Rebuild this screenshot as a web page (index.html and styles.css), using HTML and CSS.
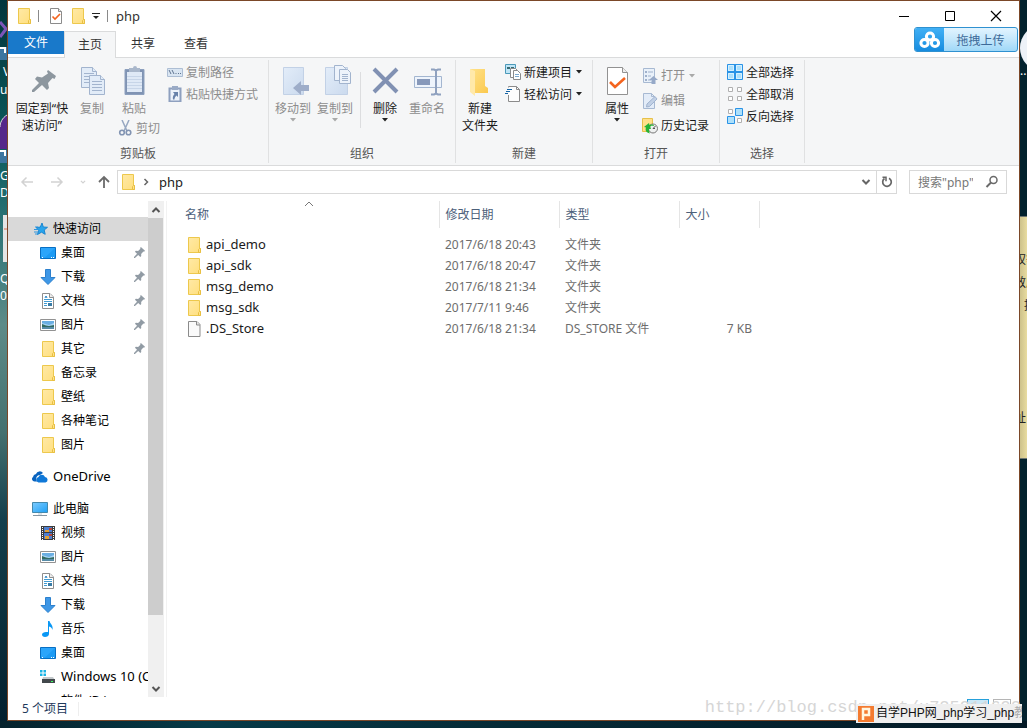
FILE: index.html
```html
<!DOCTYPE html>
<html lang="zh-CN">
<head>
<meta charset="utf-8">
<title>php</title>
<link rel="stylesheet" href="styles.css">
</head>
<body class="desktop">
<svg class="sprite" aria-hidden="true">
  <linearGradient id="gFolder" x1="0" y1="0" x2="1" y2="1"><stop offset="0" stop-color="#ffe9a6"/><stop offset="1" stop-color="#ffdf7e"/></linearGradient>
  <linearGradient id="gPale" x1="0" y1="0" x2="1" y2="1"><stop offset="0" stop-color="#e3edf9"/><stop offset="1" stop-color="#cbdaee"/></linearGradient>
  <linearGradient id="gScreen" x1="0" y1="0" x2="1" y2="1"><stop offset="0" stop-color="#7ccbff"/><stop offset="1" stop-color="#1fa0f5"/></linearGradient>
  <linearGradient id="gGold" x1="0" y1="0" x2="1" y2="1"><stop offset="0" stop-color="#ffe28a"/><stop offset="1" stop-color="#fbc94f"/></linearGradient>
  <symbol id="folder" viewBox="0 0 16 16"><path d="M2.500 .5h11v11h1v4h-12z" fill="url(#gFolder)" stroke="#edc84c"/><path d="M12.500 15.500v-3l1-1h1v4z" fill="#ffe28a" stroke="#e8bf42"/></symbol>
  <symbol id="file" viewBox="0 0 16 16"><path d="M2.500 .5h8.500l3 3v12H2.500z" fill="#fafafa" stroke="#8b8b8b"/><path d="M10.500 .5v3.500H14" fill="#e6e6e6" stroke="#8b8b8b"/></symbol>
  <symbol id="checkfile" viewBox="0 0 16 16"><path d="M2.500 .5h8l3 3v12h-11z" fill="#fff" stroke="#8b8b8b"/><path d="M10.500 .5v3h3" fill="#eee" stroke="#8b8b8b"/><path d="M4.500 8.500l2.500 2.500 5-5" fill="none" stroke="#f4641e" stroke-width="1.600"/></symbol>
  <symbol id="pin" viewBox="0 0 12 12"><path d="M7.500 0L12 4l-1 1.200-.8-.2-2.400 2.500.1 2.300-1 1L4.600 8.600 1 12H0v-1l3.300-3.600L1 5.200l1-1 2.500.1L7 2l-.3-1z" fill="#919ba4"/></symbol>
  <symbol id="desk" viewBox="0 0 16 16"><path d="M.5 2.500h15v11H.5z" fill="#1c9bf4" stroke="#086fc3"/><path d="M1 3h14L5 12.500H1z" fill="#35acff" opacity=".6"/><path d="M2 12h1v1H2zm9 0h1v1h-1zm2 0h1v1h-1z" fill="#fff"/></symbol>
  <symbol id="down" viewBox="0 0 16 16"><path d="M5.500 .5h5v8h4.500L8 15.500 1 8.500h4.500z" fill="#3e97e6" stroke="#2c80cd"/></symbol>
  <symbol id="doc" viewBox="0 0 16 16"><path d="M2.500 .5h7.500l3.500 3.500v11.500h-11z" fill="#fff" stroke="#8d8d8d"/><path d="M9.500 .5v4h4" fill="#eee" stroke="#8d8d8d"/><path d="M4 6.500h8M4 8.500h8M4 10.500h3M4 12.500h3" stroke="#409bd2"/><path d="M5 5l1-2 1 2" fill="none" stroke="#2683c5"/><path d="M8 10h4v3H8z" fill="#3a7ba5"/></symbol>
  <symbol id="pic" viewBox="0 0 16 16"><path d="M.5 2.500h15v11H.5z" fill="#fff" stroke="#929292"/><path d="M2 4h12v8H2z" fill="#a9d5f5"/><path d="M2 4h12v2L9 8 2 6z" fill="#6aaee2"/><path d="M2 7l4 1.500 3 .5 5-1v4H2z" fill="#326b62"/><path d="M2 10h12v2H2z" fill="#568ba7"/></symbol>
  <symbol id="cloud" viewBox="0 0 16 16"><path d="M5 12.500H2.500A2.500 2.500 0 0 1 1 8a3.500 3.500 0 0 1 3-3 4 4 0 0 1 7-1L8 6c-3 0-5 3-3 6.500z" fill="#0a63be"/><path d="M6.500 13.500a2.800 2.800 0 0 1 0-5.500A3.500 3.500 0 0 1 13 8a2.800 2.800 0 0 1 .5 5.500z" fill="#0f78d8"/></symbol>
  <symbol id="pc" viewBox="0 0 16 16"><path d="M.5 1.500h15v10H.5z" fill="url(#gScreen)" stroke="#4389ad"/><path d="M6 12h4v2H6z" fill="#dce3e8"/><path d="M1 14h14v1H1z" fill="#8696a2"/></symbol>
  <symbol id="film" viewBox="0 0 16 16"><path d="M1 1h14v14H1z" fill="#3c3c3c"/><path d="M4 2h8v5H4zm0 6h8v6H4z" fill="#4d7fd1"/><path d="M5 5h4v2H5zm0 6h4v3H5z" fill="#e5a132"/><path d="M9 3h3v2H9zm0 6h3v2H9z" fill="#b94533"/><path d="M2.500 2v13M13.500 2v13" stroke="#fff" stroke-dasharray="1 1"/></symbol>
  <symbol id="note" viewBox="0 0 16 16"><path d="M8 0h1.500c.5 3 4 4 3 9-.5-2-1.500-3-3.500-3.500V13c0 2-2 3-4 3s-3-1-3-2.500S4 11 6 11h2z" fill="#0a98f5"/></symbol>
  <symbol id="drive" viewBox="0 0 16 16"><path d="M0 1h2.500v2.500H0zM3.500 1H6v2.500H3.500zM0 4.500h2.500V7H0zM3.500 4.500H6V7H3.500z" fill="#19b3e5"/><path d="M3 8h10l2 3H2z" fill="#c4c9cc"/><path d="M2 10h13v4H2z" fill="#42484c"/><path d="M11 12h2v1h-2z" fill="#3dff63"/></symbol>
  <symbol id="star" viewBox="0 0 16 16"><path d="M10 2l1.300 4 4.200.3-3.300 2.700 1 4.300L9.500 11.200l-4 2.300 1.300-4.300L4 6.500l4.300-.4z" fill="#28a4ec" stroke="#1c86d0"/><path d="M2 8.500h4M3 6h3M2 11h4M3 13h3" stroke="#2f96df"/></symbol>
  <symbol id="caret" viewBox="0 0 6 4"><path d="M0 0h6L3 3.500z" fill="currentColor"/></symbol>
  <symbol id="chev" viewBox="0 0 10 10"><path d="M1.500 3l3.500 3.500L8.500 3" fill="none" stroke="currentColor" stroke-width="2"/></symbol>
  <symbol id="newitem" viewBox="0 0 16 16"><path d="M.5 .5h10v9H.5z" fill="#bfe5f6" stroke="#4b99b9"/><path d="M2 3h3v2H2zm4 0h3v2H6z" fill="#376a72"/><path d="M5.500 4.500h5l2 2v7h-7z" fill="#fff" stroke="#8b8b8b"/><path d="M8.500 6.500h4l3 3v6h-7z" fill="#fff" stroke="#8b8b8b"/><path d="M10 10.500h4M10 12.500h4" stroke="#7da9cd"/></symbol>
  <symbol id="easy" viewBox="0 0 16 16"><path d="M3.500 1.500V.5h8l3 3v12h-11V9" fill="#fdfdfd" stroke="#8b8b8b"/><path d="M11.500 .5v3h3" fill="none" stroke="#8b8b8b"/><path d="M2 3.500h5M1 5.500h4M0 7.500h3" stroke="#1463a5"/></symbol>
  <symbol id="open" viewBox="0 0 16 16"><path d="M1.500 .5h11v14h-11z" fill="#e9f1fa" stroke="#a7b9d2"/><path d="M3 3h2v2H3zm0 4h2v2H3zm0 4h2v2H3z" fill="#a0b1cb"/><path d="M6 4h5M6 8h3M6 12h3" stroke="#a0b1cb"/><path d="M11.500 8L16 12h-2.500v4h-4v-4H7z" fill="#96a9c8"/></symbol>
  <symbol id="edit" viewBox="0 0 16 16"><path d="M1.500 .5h8l3 3v12h-11z" fill="#e3ecf8" stroke="#a7b9d2"/><path d="M9.500 .5v3h3" fill="none" stroke="#a7b9d2"/><path d="M4.500 14l.5-3L13 3.500 15 6l-7.500 7.500z" fill="#c1d0e5" stroke="#a1b4d0"/></symbol>
  <symbol id="history" viewBox="0 0 16 16"><path d="M.5 .5h10v13H.5z" fill="#ffe08a" stroke="#e6c14b"/><circle cx="11" cy="10.500" r="4.500" fill="#eef0f0" stroke="#777"/><path d="M11 10.500l2.500-2.500M11 10.500h2" fill="none" stroke="#555"/><path d="M2 9l5-4 .5 2C11 6 12 7 12 8c-3-.5-4 0-3.500 1.500L9 11l-2 0c0 2 0 3 1 4.500-4-1-5-3-4-6z" fill="#26b336"/></symbol>
  <symbol id="selall" viewBox="0 0 16 16"><path d="M.5 .5h15v15H.5z" fill="#ade0fb" stroke="#2a93e6"/><path d="M8 0v16M0 8h16" stroke="#2a93e6" stroke-width="2"/><path d="M1.500 1.500h5v5h-5zM9.500 1.500h5v5h-5zM1.500 9.500h5v5h-5zM9.500 9.500h5v5h-5z" fill="none" stroke="#d5f0ff"/></symbol>
  <symbol id="selnone" viewBox="0 0 16 16"><path d="M1.500 1.500h4v4h-4zM10.500 1.500h4v4h-4zM1.500 10.500h4v4h-4zM10.500 10.500h4v4h-4z" fill="#fff" stroke="#b0b0b0"/></symbol>
  <symbol id="selinv" viewBox="0 0 16 16"><path d="M1.500 1.500h4v4h-4zM10.500 10.500h4v4h-4z" fill="#fff" stroke="#b0b0b0"/><path d="M8.500 .5h7v7h-7zM.5 8.500h7v7h-7z" fill="#ade0fb" stroke="#2a93e6"/></symbol>
</svg>

<aside class="edge edge-left" aria-hidden="true">
  <svg class="edge-art" width="7" height="270" viewBox="0 0 7 270"><path d="M0 22l6 7-6 8" fill="none" stroke="#7b55b8" stroke-width="3"/><path d="M0 47h7v13H0zM0 150h7v13H0z" fill="#3c75a0"/><path d="M0 48h5v5M0 151h5v5" fill="none" stroke="#fff" stroke-width="2"/><path d="M7 115c-5 3-7 8-7 12v22h7z" fill="#54288a"/><path d="M7 115c-5 3-7 8-7 12" fill="none" stroke="#ddd"/><path d="M3 215h4v47H3z" fill="#e5e5e5"/><path d="M4 229h3" stroke="#e07050"/></svg>
  <span class="tag tag-a">V</span><span class="tag tag-b">uo</span><span class="tag tag-c">G</span><span class="tag tag-d">Do</span><span class="tag tag-e">Q</span><span class="tag tag-f">01</span>
</aside>

<main class="window">
  <header class="titlebar">
    <div class="quick">
      <svg class="i16"><use href="#folder"/></svg><i class="bar"></i>
      <button class="plain check" aria-label="属性"><svg class="i16"><use href="#checkfile"/></svg></button>
      <button class="plain" aria-label="新建文件夹"><svg class="i16"><use href="#folder"/></svg></button>
      <button class="plain more" aria-label="自定义"><svg width="8" height="8" viewBox="0 0 8 8"><path d="M0 1.500h8" stroke="#222"/><path d="M1 4h6L4 7z" fill="#222"/></svg></button><i class="bar"></i>
    </div>
    <h1 class="title">php</h1>
    <div class="winbtns">
      <button class="plain" aria-label="最小化"><svg width="12" height="12" viewBox="0 0 12 12"><path d="M1 6.500h10" stroke="#000"/></svg></button>
      <button class="plain" aria-label="最大化"><svg width="12" height="12" viewBox="0 0 12 12"><path d="M1.500 1.500h9v9h-9z" fill="none" stroke="#000"/></svg></button>
      <button class="plain" aria-label="关闭"><svg width="12" height="12" viewBox="0 0 12 12"><path d="M1 1l10 10M11 1L1 11" stroke="#000" stroke-width="1.200"/></svg></button>
    </div>
  </header>

  <nav class="tabs">
    <button class="tab tab-file">文件</button><button class="tab tab-on">主页</button><button class="tab tab-share">共享</button><button class="tab">查看</button>
    <button class="upload"><span class="upload-logo"><svg width="22" height="18" viewBox="0 0 22 18"><g fill="none" stroke="#fff" stroke-width="3"><circle cx="11" cy="5.500" r="3.600"/><circle cx="5.500" cy="12" r="3.600"/><circle cx="16" cy="12" r="3.600"/></g></svg></span><span class="upload-text">拖拽上传</span></button>
  </nav>

  <section class="ribbon">
    <div class="group g-clip">
      <div class="tools">
        <button class="big w68"><svg class="i32" viewBox="0 0 32 32"><path d="M22 5l8 6-1.500 3-2-1-4.500 5 1 5-2 2-5-5-8 7H6v-2l7-7-4-4 2-2.500 5 1 6-4-1-2z" fill="#8d979f"/></svg>固定到“快<br>速访问”</button>
        <button class="big off w32"><svg class="i32" viewBox="0 0 32 32"><g fill="#e2ecf8" stroke="#a2b4ce"><path d="M5.500 2.500h11l4 4v16h-15z"/><path d="M16.500 2.500v4h4M8 8.500h10M8 11.500h10M8 14.500h10M8 17.500h10"/><path d="M13.500 10.500h11l4 4v15h-15z"/><path d="M24.500 10.500v4h4M16 16.500h10M16 19.500h10M16 22.500h10M16 25.500h10"/></g></svg>复制</button>
        <div class="stack">
          <button class="big off"><svg class="i32" viewBox="0 0 32 32"><path d="M7 4.500h19v25H7z" fill="#7f93b3" stroke="#8da0be"/><path d="M9 7h15v20H9z" fill="#dfe9f6"/><path d="M11 3h4a2 2 0 0 1 4 0h3v4H11z" fill="#a9b7cb"/><path d="M9 11.500h15M9 14.500h15M9 17.500h15M9 20.500h15M9 23.500h15" stroke="#c7d5e8"/></svg>粘贴</button>
          <button class="row off"><svg class="i16" viewBox="0 0 16 16"><path d="M4 0l5 11M11 0L6 11" stroke="#96a7c1" stroke-width="1.500"/><circle cx="4" cy="12.500" r="2.300" fill="none" stroke="#8294b2" stroke-width="1.600"/><circle cx="10.500" cy="12.500" r="2.300" fill="none" stroke="#8294b2" stroke-width="1.600"/></svg>剪切</button>
        </div>
        <div class="list">
          <button class="row off"><svg class="i16" viewBox="0 0 16 16"><path d="M.5 4.500h15v8H.5z" fill="#d9e5f2" stroke="#adbed4"/><path d="M2 6l2 4M5 6l2 4M8.500 9.500h1M11 9.500h1M13 9.500h1" stroke="#5f7491"/></svg>复制路径</button>
          <button class="row off"><svg class="i16" viewBox="0 0 16 16"><path d="M2.500 2.500h11v13h-11z" fill="#edf3fb" stroke="#8ea0bf" stroke-width="2"/><path d="M5 0h6v4H5z" fill="#9aabc6"/><path d="M6 6h5v5L9.500 9.500C8 11 7.500 12 7.500 13.500H6c-.5-2 0-4 1.500-5.500z" fill="#6882aa"/></svg>粘贴快捷方式</button>
        </div>
      </div>
      <div class="caption">剪贴板</div>
    </div>
    <div class="group g-org">
      <div class="tools">
        <button class="big off w42"><svg class="i32" viewBox="0 0 32 32"><path d="M6.500 2.500h20v27h-20z" fill="url(#gPale)" stroke="#c2d1e6"/><path d="M32 20v6h-8v4l-8-7 8-7v4z" fill="#9eadc9"/></svg>移动到<svg class="arrow"><use href="#caret"/></svg></button>
        <button class="big off w42"><svg class="i32" viewBox="0 0 32 32"><path d="M6.500 2.500h22v27h-22z" fill="url(#gPale)" stroke="#c2d1e6"/><g fill="#edf3fb" stroke="#a2b4ce"><path d="M15.500 .5h8l3 3v12h-11z"/><path d="M20.500 4.500h8l3 3v11h-11zM23 9.500h6M23 11.500h6M23 13.500h6M23 15.500h6"/></g></svg>复制到<svg class="arrow"><use href="#caret"/></svg></button>
        <i class="split"></i>
        <button class="big w42"><svg class="i32" viewBox="0 0 32 32"><path d="M5 4l23 23M28 4L5 27" stroke="#8191b3" stroke-width="4"/></svg>删除<svg class="arrow"><use href="#caret"/></svg></button>
        <button class="big off w42"><svg class="i32" viewBox="0 0 32 32"><path d="M3.500 11.500h27v11h-27z" fill="#eef4fc" stroke="#a3b6d0"/><path d="M6 14h13v6H6z" fill="#8799ba"/><path d="M20 4.500h3l2 1 2-1h3M25 5v24M20 29.500h3l2-1 2 1h3" fill="none" stroke="#8fa1bf" stroke-width="2"/></svg>重命名</button>
      </div>
      <div class="caption">组织</div>
    </div>
    <div class="group g-new">
      <div class="tools">
        <button class="big w48"><svg class="i32" viewBox="0 0 32 32"><path d="M6 4h15v17l3 2v5H10z" fill="url(#gGold)"/><path d="M6 4l5 2v25l-5-4z" fill="#ffe9aa"/></svg>新建<br>文件夹</button>
        <div class="list">
          <button class="row"><svg class="i16"><use href="#newitem"/></svg>新建项目<svg class="arrow"><use href="#caret"/></svg></button>
          <button class="row"><svg class="i16"><use href="#easy"/></svg>轻松访问<svg class="arrow"><use href="#caret"/></svg></button>
        </div>
      </div>
      <div class="caption">新建</div>
    </div>
    <div class="group g-open">
      <div class="tools">
        <button class="big w48"><svg class="i32" viewBox="0 0 32 32"><path d="M6.500 2.500h15l5 5v22h-20z" fill="#fff" stroke="#929292"/><path d="M21.500 2.500v5h5" fill="#eee" stroke="#929292"/><path d="M9 17l5 5 10-9" fill="none" stroke="#f4641e" stroke-width="2.600"/></svg>属性<svg class="arrow"><use href="#caret"/></svg></button>
        <div class="list list-tall">
          <button class="row off"><svg class="i16"><use href="#open"/></svg>打开<svg class="arrow"><use href="#caret"/></svg></button>
          <button class="row off"><svg class="i16"><use href="#edit"/></svg>编辑</button>
          <button class="row"><svg class="i16"><use href="#history"/></svg>历史记录</button>
        </div>
      </div>
      <div class="caption">打开</div>
    </div>
    <div class="group g-sel">
      <div class="tools">
        <div class="list">
          <button class="row"><svg class="i16"><use href="#selall"/></svg>全部选择</button>
          <button class="row"><svg class="i16"><use href="#selnone"/></svg>全部取消</button>
          <button class="row"><svg class="i16"><use href="#selinv"/></svg>反向选择</button>
        </div>
      </div>
      <div class="caption">选择</div>
    </div>
  </section>

  <div class="address">
    <button class="plain go faint" aria-label="后退"><svg width="14" height="14" viewBox="0 0 14 14"><path d="M13 7H2M6.500 2.500L2 7l4.500 4.500" fill="none" stroke="currentColor" stroke-width="1.500"/></svg></button>
    <button class="plain go faint" aria-label="前进"><svg width="14" height="14" viewBox="0 0 14 14"><path d="M1 7h11M7.500 2.500L12 7l-4.500 4.500" fill="none" stroke="currentColor" stroke-width="1.500"/></svg></button>
    <button class="plain go-s faint" aria-label="最近位置"><svg width="6" height="6" viewBox="0 0 10 10"><use href="#chev"/></svg></button>
    <button class="plain up" aria-label="上移"><svg width="14" height="14" viewBox="0 0 14 14"><path d="M7 13V2M2 7l5-5 5 5" fill="none" stroke="currentColor" stroke-width="1.800"/></svg></button>
    <div class="path">
      <svg class="i16"><use href="#folder"/></svg>
      <svg class="sep" width="8" height="8" viewBox="0 0 8 8"><path d="M2.500 1l3 3-3 3" fill="none" stroke="#666" stroke-width="1.500"/></svg>
      <a class="crumb" href="#php">php</a>
      <button class="plain drop" aria-label="以前的位置"><svg width="10" height="10"><use href="#chev"/></svg></button>
      <button class="plain refresh" aria-label="刷新"><svg width="14" height="14" viewBox="0 0 14 14"><path d="M4.500 3.500A4.300 4.300 0 1 0 9 3.200" fill="none" stroke="currentColor" stroke-width="1.700"/><path d="M2.500 2.200h3.500v4" fill="none" stroke="currentColor" stroke-width="1.500"/></svg></button>
    </div>
    <label class="search"><input type="search" placeholder='搜索"php"' aria-label='搜索"php"'><svg width="14" height="14" viewBox="0 0 14 14"><circle cx="8.500" cy="5" r="3.500" fill="none" stroke="#6a6a6a" stroke-width="1.500"/><path d="M6 7.500l-4.500 4.500" stroke="#6a6a6a" stroke-width="2"/></svg></label>
  </div>

  <div class="content">
    <nav class="tree">
      <div class="branch">
        <a class="node root picked" href="#quick"><svg class="i16"><use href="#star"/></svg>快速访问</a>
        <a class="node" href="#n1"><svg class="i16"><use href="#desk"/></svg>桌面<svg class="pin"><use href="#pin"/></svg></a>
        <a class="node" href="#n2"><svg class="i16"><use href="#down"/></svg>下载<svg class="pin"><use href="#pin"/></svg></a>
        <a class="node" href="#n3"><svg class="i16"><use href="#doc"/></svg>文档<svg class="pin"><use href="#pin"/></svg></a>
        <a class="node" href="#n4"><svg class="i16"><use href="#pic"/></svg>图片<svg class="pin"><use href="#pin"/></svg></a>
        <a class="node" href="#n5"><svg class="i16"><use href="#folder"/></svg>其它<svg class="pin"><use href="#pin"/></svg></a>
        <a class="node" href="#n6"><svg class="i16"><use href="#folder"/></svg>备忘录</a>
        <a class="node" href="#n7"><svg class="i16"><use href="#folder"/></svg>壁纸</a>
        <a class="node" href="#n8"><svg class="i16"><use href="#folder"/></svg>各种笔记</a>
        <a class="node" href="#n9"><svg class="i16"><use href="#folder"/></svg>图片</a>
      </div>
      <div class="branch"><a class="node root latin" href="#od"><svg class="i16"><use href="#cloud"/></svg>OneDrive</a></div>
      <div class="branch">
        <a class="node root" href="#pc"><svg class="i16"><use href="#pc"/></svg>此电脑</a>
        <a class="node" href="#p1"><svg class="i16"><use href="#film"/></svg>视频</a>
        <a class="node" href="#p2"><svg class="i16"><use href="#pic"/></svg>图片</a>
        <a class="node" href="#p3"><svg class="i16"><use href="#doc"/></svg>文档</a>
        <a class="node" href="#p4"><svg class="i16"><use href="#down"/></svg>下载</a>
        <a class="node" href="#p5"><svg class="i16"><use href="#note"/></svg>音乐</a>
        <a class="node" href="#p6"><svg class="i16"><use href="#desk"/></svg>桌面</a>
        <a class="node latin" href="#p7"><svg class="i16"><use href="#drive"/></svg>Windows 10 (C:)</a>
        <a class="node blank" href="#p8">软件 (D:)</a>
      </div>
    </nav>
    <div class="scroll">
      <button class="plain flip" aria-label="向上滚动"><svg width="10" height="10"><use href="#chev"/></svg></button>
      <div class="track"><div class="thumb"></div></div>
      <button class="plain" aria-label="向下滚动"><svg width="10" height="10"><use href="#chev"/></svg></button>
    </div>
    <div class="files">
      <table>
        <thead><tr><th class="c-name">名称<svg class="sort" width="10" height="6" viewBox="0 0 10 6"><path d="M1 5l4-4 4 4" fill="none" stroke="#777"/></svg></th><th>修改日期</th><th>类型</th><th class="c-size">大小</th></tr></thead>
        <tbody>
          <tr><td><span class="name"><svg class="i16"><use href="#folder"/></svg>api_demo</span></td><td>2017/6/18 20:43</td><td>文件夹</td><td></td></tr>
          <tr><td><span class="name"><svg class="i16"><use href="#folder"/></svg>api_sdk</span></td><td>2017/6/18 20:47</td><td>文件夹</td><td></td></tr>
          <tr><td><span class="name"><svg class="i16"><use href="#folder"/></svg>msg_demo</span></td><td>2017/6/18 21:34</td><td>文件夹</td><td></td></tr>
          <tr><td><span class="name"><svg class="i16"><use href="#folder"/></svg>msg_sdk</span></td><td>2017/7/11 9:46</td><td>文件夹</td><td></td></tr>
          <tr><td><span class="name"><svg class="i16"><use href="#file"/></svg>.DS_Store</span></td><td>2017/6/18 21:34</td><td>DS_STORE 文件</td><td class="num">7 KB</td></tr>
        </tbody>
      </table>
    </div>
  </div>

  <footer class="status"><span class="count">5 个项目</span>
    <div class="views"><button class="view view-on" aria-label="详细信息"></button><button class="view" aria-label="大图标"></button></div>
  </footer>
</main>

<aside class="edge edge-right" aria-hidden="true">
  <span class="bubble"></span><span class="dots">...</span>
  <div class="sticky"><span>权等</span><span>效应</span><span class="shift">提</span><span>.</span><span class="last">址</span></div>
</aside>

<div class="watermark">http://blog.csdn.net/u725911692</div>
<div class="badge"><svg width="16" height="16" viewBox="0 0 16 16"><path d="M0 0h16v16H0z" fill="#f47b30"/><path d="M5 14V3h6v6H5" fill="none" stroke="#fff6e0" stroke-width="2.500"/></svg><span>自学PHP网_php学习_php<span class="fade">教程</span></span></div>
</body>
</html>
```

FILE: styles.css
```css
* { box-sizing: border-box; }

body.desktop {
  margin: 0;
  height: 100vh;
  overflow: hidden;
  position: relative;
  display: grid;
  grid-template-columns: 7px minmax(0, 1fr) 7px;
  padding-bottom: 7px;
  background: linear-gradient(90deg, #05222c, #063a48 20%, #052a36 50%, #031925);
  color: #1a1a1a;
  font: 12px/17px "Noto Sans", "Noto Sans CJK SC", sans-serif;
}

button, input {
  font: inherit;
  color: inherit;
  margin: 0;
  padding: 0;
  border: 0;
  background: none;
}

svg { display: block; flex: none; }
a { color: inherit; text-decoration: none; }
.sprite { position: absolute; width: 0; height: 0; }
.i16 { width: 16px; height: 16px; }
.i32 { width: 32px; height: 32px; }
.plain { display: flex; align-items: center; justify-content: center; }

/* desktop edges */
.edge { position: relative; overflow: hidden; }
.edge-left { background: linear-gradient(#03353c, #0a5a5c 20%, #2f7577 32%, #5d8b88 45%, #44706f 60%, #143f4c 72%, #03202e); }
.edge-right { background: #03222e; }
.edge-art { position: absolute; top: 0; left: 0; }
.tag { position: absolute; left: 0; color: #fff; }
.tag-a { top: 63px; left: 3px; }
.tag-b { top: 81px; }
.tag-c { top: 167px; }
.tag-d { top: 184px; }
.tag-e { top: 270px; }
.tag-f { top: 287px; }
.bubble { position: absolute; top: 25px; left: 0; width: 44px; height: 46px; border-radius: 50%; background: #edf2f8; }
.dots { position: absolute; top: 62px; left: 0; color: #fff; }
.sticky {
  position: absolute;
  top: 216px;
  left: 0;
  width: 100%;
  height: 243px;
  padding-top: 34px;
  overflow: hidden;
  border: solid #6d7570;
  border-width: 1px 0;
  background: linear-gradient(90deg, #cdc28b, #e8dca0);
  color: #222;
  white-space: nowrap;
}
.sticky span { display: block; height: 23px; margin-left: -6px; }
.sticky .shift { margin-left: 4px; }
.sticky .last { margin-top: 66px; }

/* window frame */
.window {
  display: flex;
  flex-direction: column;
  min-height: 0;
  background: #fff;
  border: 1px solid #7b4728;
}
.titlebar { display: flex; align-items: center; height: 30px; padding-left: 8px; }
.quick { display: flex; align-items: center; gap: 6px; }
.quick .bar { width: 1px; height: 12px; background: #8a8a8a; }
.check { margin: 0 0 0 3px; }
.more { margin: 0 1px 0 0; }
.title { margin: 0 0 0 8px; font-size: 13px; font-weight: 400; color: #333; }
.winbtns { display: flex; margin-left: auto; }
.winbtns .plain { width: 46px; height: 28px; }

/* tabs */
.tabs { display: flex; height: 27px; border-bottom: 1px solid #dadbdc; color: #333; }
.tab { width: 52px; height: 25px; padding: 0; }
.tab-file { width: 56px; height: 23px; background: #1979ca; color: #fff; }
.tab-on { height: 27px; padding-bottom: 2px; border: 1px solid #dadbdc; border-bottom: 0; background: #f5f6f7; }
.tab-share { width: 54px; }
.upload {
  display: flex;
  align-self: flex-start;
  width: 104px;
  height: 25px;
  margin: -4px 1px 0 auto;
  position: relative;
  border: 1px solid #2f91d0;
  border-radius: 3px;
  overflow: hidden;
  background: linear-gradient(#e2f4ff, #c4e7fb 50%, #9fd8f8);
}
.upload-logo { width: 29px; height: 100%; display: flex; align-items: center; justify-content: center; background: linear-gradient(#41b0f5, #168cdf); }
.upload-text { flex: 1; line-height: 25px; color: #3d6a99; }

/* ribbon */
.ribbon { display: flex; height: 108px; padding: 2px 0; background: #f5f6f7; border-bottom: 1px solid #dadbdc; }
.group { display: flex; flex-direction: column; border-right: 1px solid #e0e1e2; height: 103px; }
.g-clip { width: 261px; }
.g-org { width: 187px; }
.g-new { width: 137px; }
.g-open { width: 127px; }
.g-sel { width: 85px; }
.tools { display: flex; flex: 1; }
.caption { height: 18px; text-align: center; color: #555; }
.big {
  display: flex;
  flex-direction: column;
  align-items: center;
  align-self: flex-start;
  padding-top: 5px;
  white-space: nowrap;
}
.big .i32 { margin-bottom: 3px; }
.off { color: #8d8d8d; }
.w68 { width: 68px; }
.w32 { width: 32px; }
.w42 { width: 42px; }
.w48 { width: 48px; }
.arrow { width: 6px; height: 4px; color: #222; }
.big .arrow { margin-top: 1px; }
.off .arrow { color: #a9a9a9; }
.stack { display: flex; flex-direction: column; align-items: center; width: 52px; }
.stack .big { align-self: center; }
.stack .row { margin-left: 10px; gap: 2px; }
.list { display: flex; flex-direction: column; align-items: flex-start; padding-top: 1px; }
.row { display: flex; align-items: center; gap: 3px; height: 22px; white-space: nowrap; }
.row .arrow { margin-left: 1px; }
.g-clip .list { margin-left: 7px; }
.g-org .tools { padding-left: 3px; }
.g-new .list { margin-left: 1px; }
.g-open .list { margin-left: 1px; }
.list-tall { padding-top: 3px; }
.list-tall .row { height: 25px; }
.g-sel .list { margin-left: 7px; }
.split { width: 1px; height: 56px; margin: 12px 3px 0 4px; background: #dcdddf; }

/* address bar */
.address { display: flex; align-items: center; height: 35px; padding: 0 12px 3px 11px; color: #666; }
.go { width: 15px; margin-right: 15px; }
.go-s { width: 8px; margin-right: 8px; }
.faint { color: #d2d2d2; }
.up { width: 18px; margin-right: 4px; color: #6b6b6b; }
.path { display: flex; align-items: center; flex: 1; height: 24px; border: 1px solid #d9d9d9; padding-left: 2px; }
.sep { margin: 0 9px 0 6px; }
.crumb { flex: 1; font-size: 13px; color: #222; }
.drop { width: 20px; height: 100%; }
.refresh { width: 20px; height: 100%; border-left: 1px solid #d9d9d9; }
.search { display: flex; align-items: center; width: 98px; height: 24px; margin-left: 12px; padding: 0 7px 0 8px; border: 1px solid #d9d9d9; }
.search input { flex: 1; width: 0; outline: 0; appearance: none; }
.search input::placeholder { color: #777; opacity: 1; }

/* content */
.content { display: flex; flex: 1; min-height: 0; }
.tree { width: 140px; padding-top: 16px; overflow: hidden; color: #000; }
.branch { margin-bottom: 8px; }
.node { display: flex; align-items: center; gap: 5px; height: 24px; padding: 0 3px 1px 32px; white-space: nowrap; }
.root { padding-left: 24px; }
.blank { padding-left: 53px; }
.picked { background: #d9d9d9; }
.latin { font-size: 13px; }
.pin { width: 11px; height: 11px; margin-left: auto; }
.scroll { display: flex; flex-direction: column; width: 16px; background: #f0f0f0; color: #555; }
.scroll .plain { height: 17px; }
.flip svg { transform: rotate(180deg); }
.track { flex: 1; }
.thumb { width: 15px; height: 86%; background: #cdcdcd; }
.files { flex: 1; margin-left: 2px; border-left: 1px solid #f2f2f2; }

table { border-collapse: collapse; table-layout: fixed; width: 592px; }
th, td { padding: 0 0 0 6px; height: 21px; text-align: left; font-weight: 400; width: 120px; color: #6d6d6d; }
th { position: relative; height: 27px; border-right: 1px solid #e5e5e5; color: #4c607a; }
thead::after { content: ""; display: block; height: 6px; }
th.c-name { width: 272px; }
.c-size { width: 80px; }
th:first-child { padding-left: 18px; }
td:first-child { padding-left: 19px; }
.sort { position: absolute; top: 0; left: 137px; }
.name { display: flex; align-items: center; gap: 4px; font-size: 13px; color: #1a1a1a; }
td.num { text-align: right; padding-right: 7px; }

/* status bar */
.status { display: flex; align-items: center; height: 23px; padding: 0 8px 0 14px; color: #1e395b; }
.count { padding-right: 10px; border-right: 1px solid #eee; height: 14px; line-height: 14px; }
.views { display: flex; gap: 4px; margin-left: auto; }
.view { width: 18px; height: 12px; border: 1px solid #b5b5b5; }
.view-on { width: 22px; height: 20px; background: #cbe8f6; border-color: #26a0da; }

/* overlays */
.watermark {
  position: absolute;
  right: 6px;
  bottom: 8px;
  font: 17px/24px "Liberation Mono", monospace;
  color: #d6d6d6;
}
.badge {
  position: absolute;
  right: 5px;
  bottom: 5px;
  display: flex;
  align-items: center;
  gap: 2px;
  width: 166px;
  height: 19px;
  padding-left: 2px;
  overflow: hidden;
  white-space: nowrap;
  background: #efefef;
  color: #111;
  font-family: "Liberation Sans", "Noto Sans CJK SC", sans-serif;
}
.fade { color: #aaa; }
```
